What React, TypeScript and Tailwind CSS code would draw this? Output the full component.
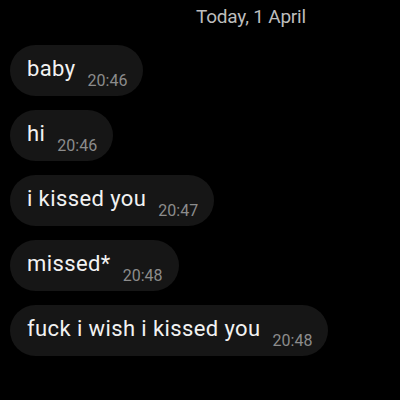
import React from 'react';

const messages = [
  { text: 'baby', time: '20:46' },
  { text: 'hi', time: '20:46' },
  { text: 'i kissed you', time: '20:47' },
  { text: 'missed*', time: '20:48' },
  { text: 'fuck i wish i kissed you', time: '20:48' },
];

export default function App() {
  return (
    <div className="w-[400px] h-[400px] bg-black overflow-hidden font-['Roboto',sans-serif]">
      <div className="flex pt-[5px] pl-[196px] h-[45px]">
        <span className="text-[19px] leading-[24px] tracking-[-0.2px] text-[#bdbdbd]">Today, 1 April</span>
      </div>
      <div className="flex flex-col items-start gap-[14px] pl-[10px]">
        {messages.map((m, i) => (
          <div
            key={i}
            className="flex items-start h-[51px] rounded-full bg-[#161616] pl-[17px] pr-[16px]"
          >
            <span className="text-[22px] leading-[22px] mt-[13px] tracking-[0.4px] text-[#f2f2f2]">{m.text}</span>
            <span className="text-[16px] leading-[16px] mt-[28px] ml-[12px] text-[#8c8c8c]">{m.time}</span>
          </div>
        ))}
      </div>
    </div>
  );
}
